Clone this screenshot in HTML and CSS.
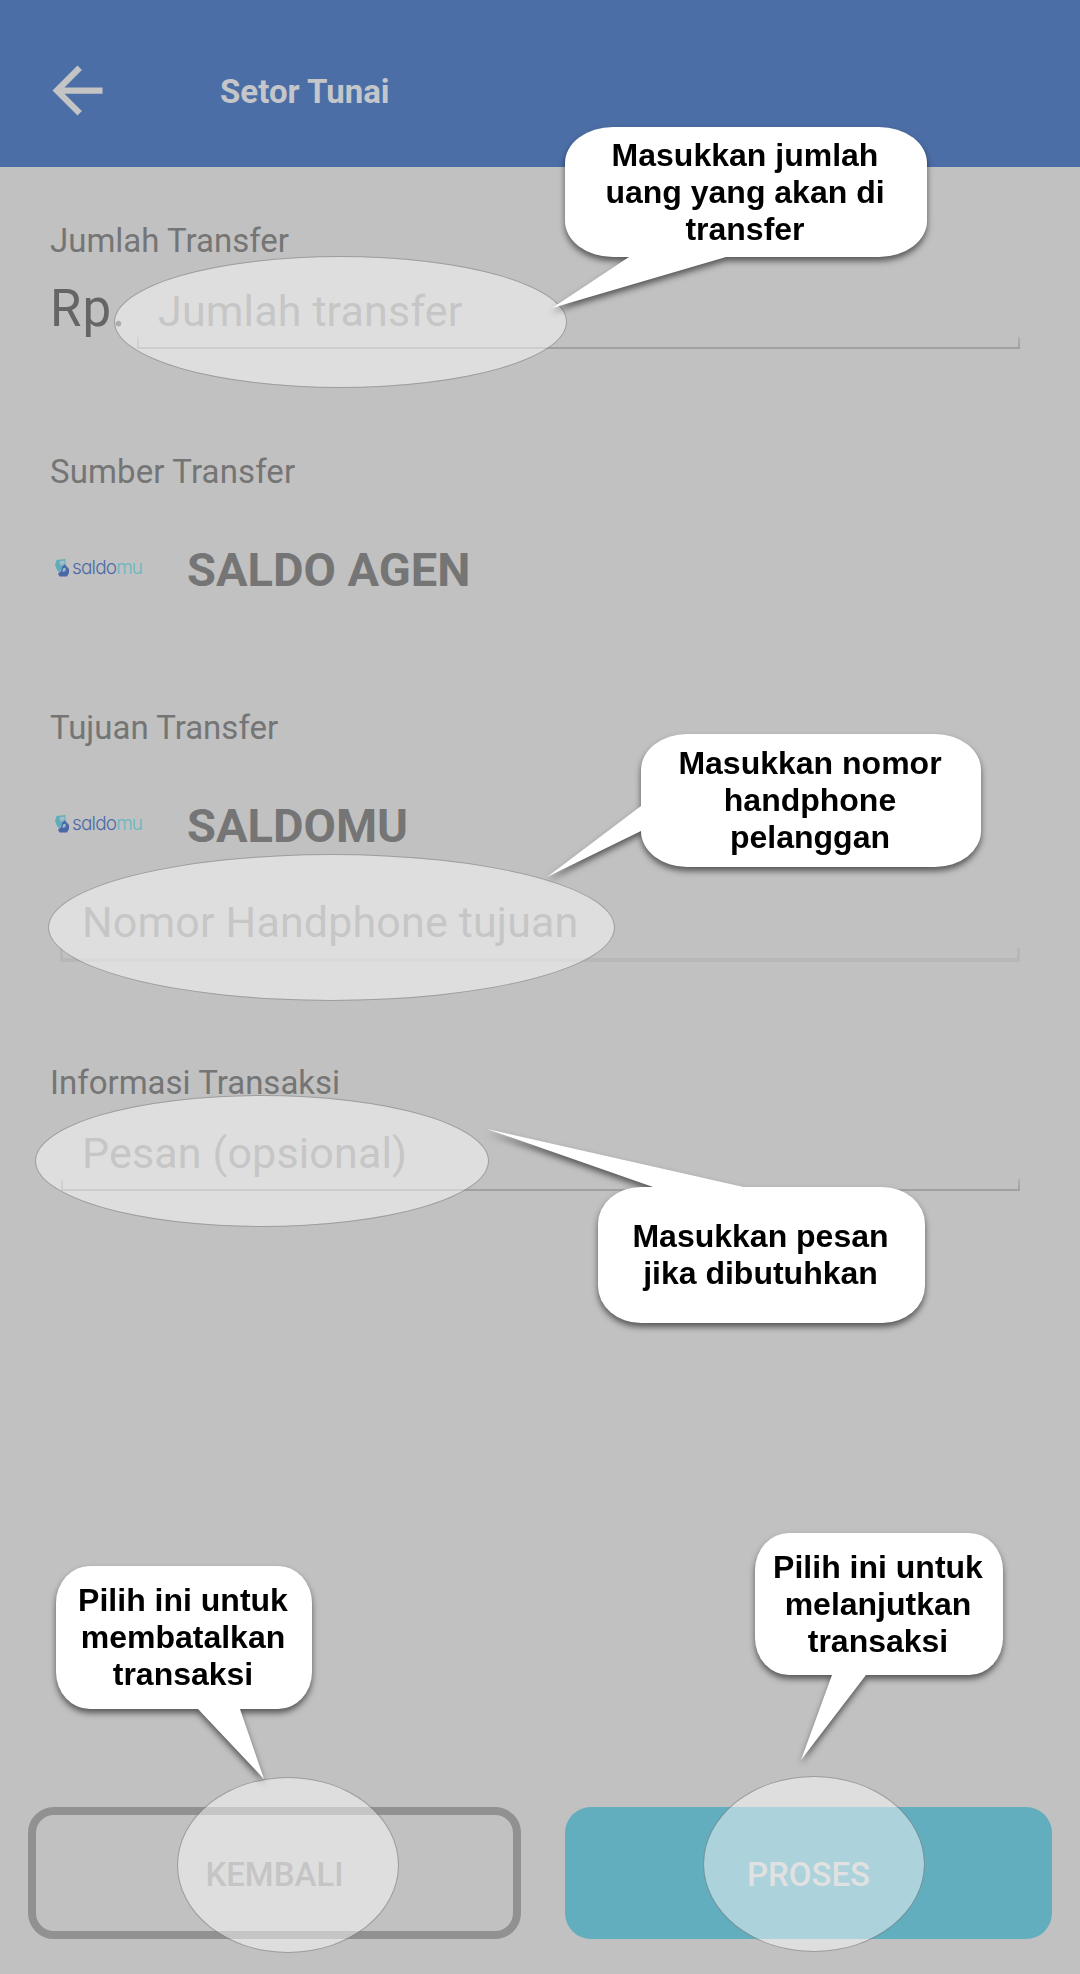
FILE: index.html
```html
<!DOCTYPE html>
<html lang="id">
<head>
<meta charset="utf-8">
<title>Setor Tunai</title>
<link rel="stylesheet" href="styles.css">
</head>
<body>
<div class="screen">
  <header class="appbar">
    <svg class="back" viewBox="0 0 24 24"><path d="M20 11H7.83l5.59-5.59L12 4l-8 8 8 8 1.41-1.41L7.83 13H20v-2z"/></svg>
    <h1 class="title">Setor Tunai</h1>
  </header>

  <main class="form">
    <section class="group group-amount">
      <h2 class="label">Jumlah Transfer</h2>
      <div class="amount">
        <span class="currency">Rp.</span>
        <div class="field field-amount"><span class="hint">Jumlah transfer</span><i class="rule"></i></div>
      </div>
    </section>

    <section class="group group-source">
      <h2 class="label">Sumber Transfer</h2>
      <div class="account">
        <div class="logo">
          <svg class="mark" viewBox="0 0 14 18"><path class="mark-light" d="M1.500 1 10.500 0V7.500L7 9 5 14 2 11 0 6Z"/><path class="mark-shine" d="M4.500 2 9.500 1.500V5L5.500 6.500Z"/><path class="mark-dark" d="M10 5.500 14 10V14L12 17.500H4.500L3 14.500 6 12.500 7 8Z"/><path class="mark-shine" d="M8 9.500 10.500 8.500V12L7.500 13Z"/></svg>
          <span class="wordmark">saldo<b>mu</b></span>
        </div>
        <span class="account-name">SALDO AGEN</span>
      </div>
    </section>

    <section class="group group-target">
      <h2 class="label">Tujuan Transfer</h2>
      <div class="account">
        <div class="logo">
          <svg class="mark" viewBox="0 0 14 18"><path class="mark-light" d="M1.500 1 10.500 0V7.500L7 9 5 14 2 11 0 6Z"/><path class="mark-shine" d="M4.500 2 9.500 1.500V5L5.500 6.500Z"/><path class="mark-dark" d="M10 5.500 14 10V14L12 17.500H4.500L3 14.500 6 12.500 7 8Z"/><path class="mark-shine" d="M8 9.500 10.500 8.500V12L7.500 13Z"/></svg>
          <span class="wordmark">saldo<b>mu</b></span>
        </div>
        <span class="account-name">SALDOMU</span>
      </div>
      <div class="field field-phone"><span class="hint">Nomor Handphone tujuan</span><i class="rule rule-soft"></i></div>
    </section>

    <section class="group group-info">
      <h2 class="label">Informasi Transaksi</h2>
      <div class="field field-note"><span class="hint">Pesan (opsional)</span><i class="rule"></i></div>
    </section>

    <div class="actions">
      <div class="btn btn-back"><span class="btn-text">KEMBALI</span></div>
      <div class="btn btn-go"><span class="btn-text">PROSES</span></div>
    </div>
  </main>

  <div class="spot spot-amount"></div>
  <div class="spot spot-phone"></div>
  <div class="spot spot-note"></div>
  <div class="spot spot-back"></div>
  <div class="spot spot-go"></div>

  <div class="bubble bubble-amount">
    <svg class="tail" viewBox="0 0 362 130"><path d="M60 126 64 130-13 181 161 130 168 126Z"/></svg>
    <p>Masukkan jumlah<br>uang yang akan di<br>transfer</p>
  </div>
  <div class="bubble bubble-phone">
    <svg class="tail" viewBox="0 0 340 133"><path d="M4 69 0 72-94 143 0 97 4 95Z"/></svg>
    <p>Masukkan nomor<br>handphone<br>pelanggan</p>
  </div>
  <div class="bubble bubble-note">
    <svg class="tail" viewBox="0 0 327 136"><path d="M62 3 55 0-111-58 145.500 0 158 3Z"/></svg>
    <p>Masukkan pesan<br>jika dibutuhkan</p>
  </div>
  <div class="bubble bubble-back">
    <svg class="tail" viewBox="0 0 256 143"><path d="M138 139 142 143 208 213 184 143 183 139Z"/></svg>
    <p>Pilih ini untuk<br>membatalkan<br>transaksi</p>
  </div>
  <div class="bubble bubble-go">
    <svg class="tail" viewBox="0 0 248 142"><path d="M78 138 77 142 46 227 111 142 114 138Z"/></svg>
    <p>Pilih ini untuk<br>melanjutkan<br>transaksi</p>
  </div>
</div>
</body>
</html>
```
FILE: styles.css
```css
* { box-sizing: border-box; }

body {
  margin: 0;
  background: #c1c1c1;
  font-family: Roboto, "Liberation Sans", sans-serif;
}

.screen {
  position: relative;
  width: 1080px;
  height: 1974px;
  overflow: hidden;
  background: #c1c1c1;
}

.appbar {
  display: flex;
  align-items: center;
  height: 167px;
  padding: 13px 0 0 39.5px;
  background: #4c6ea6;
}

.back {
  width: 75px;
  height: 75px;
  fill: #c4c4c4;
}

.title {
  margin: 4px 0 0 105.5px;
  font-size: 33px;
  line-height: 40px;
  font-weight: 700;
  color: #c4c6ca;
}

.form { padding: 54px 28px 0; }

.group { padding: 0 32px 0 22px; }
.group-amount { height: 231px; }
.group-source { height: 256px; }
.group-target { height: 355px; }
.group-info { height: 744px; }

.label {
  margin: 0;
  font-size: 33px;
  line-height: 40px;
  font-weight: 400;
  color: #757575;
}
.group-source .label { letter-spacing: .12px; }

.amount {
  display: flex;
  margin-top: 18px;
}

.currency {
  width: 87px;
  font-size: 51px;
  line-height: 60px;
  letter-spacing: 1px;
  color: #656565;
}

.field {
  display: flex;
  flex-direction: column;
}

.hint {
  font-size: 43px;
  line-height: 50px;
  letter-spacing: .15px;
  color: #949494;
}

.rule {
  height: 12px;
  margin-top: 1px;
  border: solid #a4a4a4;
  border-width: 0 2px 2px;
  border-image: linear-gradient(#b2b2b2, #a0a0a0) 1;
}

.rule-soft {
  height: 14px;
  border: solid #b7b7b7;
  border-width: 0 3px 4px;
}

.field-amount {
  flex: 1;
  padding-top: 7px;
}
.field-amount .hint { padding-left: 21px; }

.field-phone { margin: 44px 0 0 10px; }
.field-note { margin: 25px 0 0 11px; }
.field-phone .hint { padding-left: 22px; }
.field-note .hint { padding-left: 21px; }

.account {
  display: flex;
  align-items: center;
  height: 54px;
  margin-top: 51px;
}

.logo {
  display: flex;
  align-items: center;
  width: 137px;
  padding: 0 0 5px 5px;
}

.mark {
  width: 14px;
  height: 18px;
  margin-right: 3px;
}
.mark-light { fill: #63adba; }
.mark-dark { fill: #4a68a6; }
.mark-shine { fill: #a4bdcb; }

.wordmark {
  font-family: Inter, sans-serif;
  font-size: 19px;
  line-height: 22px;
  font-weight: 300;
  letter-spacing: -.85px;
  font-feature-settings: "cv11";
  color: #4c6ba8;
}
.wordmark b {
  font-weight: 300;
  color: #6bb6c2;
}

.account-name {
  font-size: 47px;
  line-height: 54px;
  font-weight: 700;
  color: #757575;
}

.actions {
  display: flex;
  gap: 44px;
}

.btn {
  display: flex;
  align-items: center;
  justify-content: center;
  height: 132px;
  border-radius: 26px;
  font-size: 33px;
  line-height: 40px;
  font-weight: 500;
}
.btn-back {
  width: 493px;
  border: 8px solid #919191;
  color: #919191;
}
.btn-go {
  width: 487px;
  background: #62adbe;
  color: #c6c6c6;
}
.btn-text { padding-top: 3px; }

/* Translucent highlight over the control being explained */
.spot {
  position: absolute;
  border: 1px solid rgba(130, 130, 130, .55);
  border-radius: 50%;
  background: rgba(255, 255, 255, .47);
  background-clip: padding-box;
}
.spot-amount { left: 114px; top: 256px; width: 453px; height: 132px; }
.spot-phone { left: 48px; top: 854px; width: 567px; height: 147px; }
.spot-note { left: 35px; top: 1095px; width: 454px; height: 132px; }
.spot-back { left: 177px; top: 1777px; width: 222px; height: 176px; }
.spot-go { left: 703px; top: 1776px; width: 222px; height: 176px; }

/* Speech bubble with a pointed tail */
.bubble {
  position: absolute;
  display: flex;
  align-items: center;
  justify-content: center;
  background: #fff;
  filter: drop-shadow(0 4px 3px rgba(0, 0, 0, .55));
}
.bubble p {
  position: relative;
  margin: 0;
  padding-right: 2px;
  font: 700 32px/37px "Liberation Sans", sans-serif;
  text-align: center;
  white-space: nowrap;
  color: #000;
}
.tail {
  position: absolute;
  left: 0;
  top: 0;
  width: 100%;
  height: 100%;
  overflow: visible;
  fill: #fff;
}
.bubble-amount { left: 565px; top: 127px; width: 362px; height: 130px; border-radius: 48px / 36px; }
.bubble-phone { left: 641px; top: 734px; width: 340px; height: 133px; border-radius: 46px / 36px; }
.bubble-note { left: 598px; top: 1187px; width: 327px; height: 136px; border-radius: 43px / 37px; }
.bubble-back { left: 56px; top: 1566px; width: 256px; height: 143px; border-radius: 34px / 37px; }
.bubble-go { left: 755px; top: 1533px; width: 248px; height: 142px; border-radius: 34px / 37px; }
```
